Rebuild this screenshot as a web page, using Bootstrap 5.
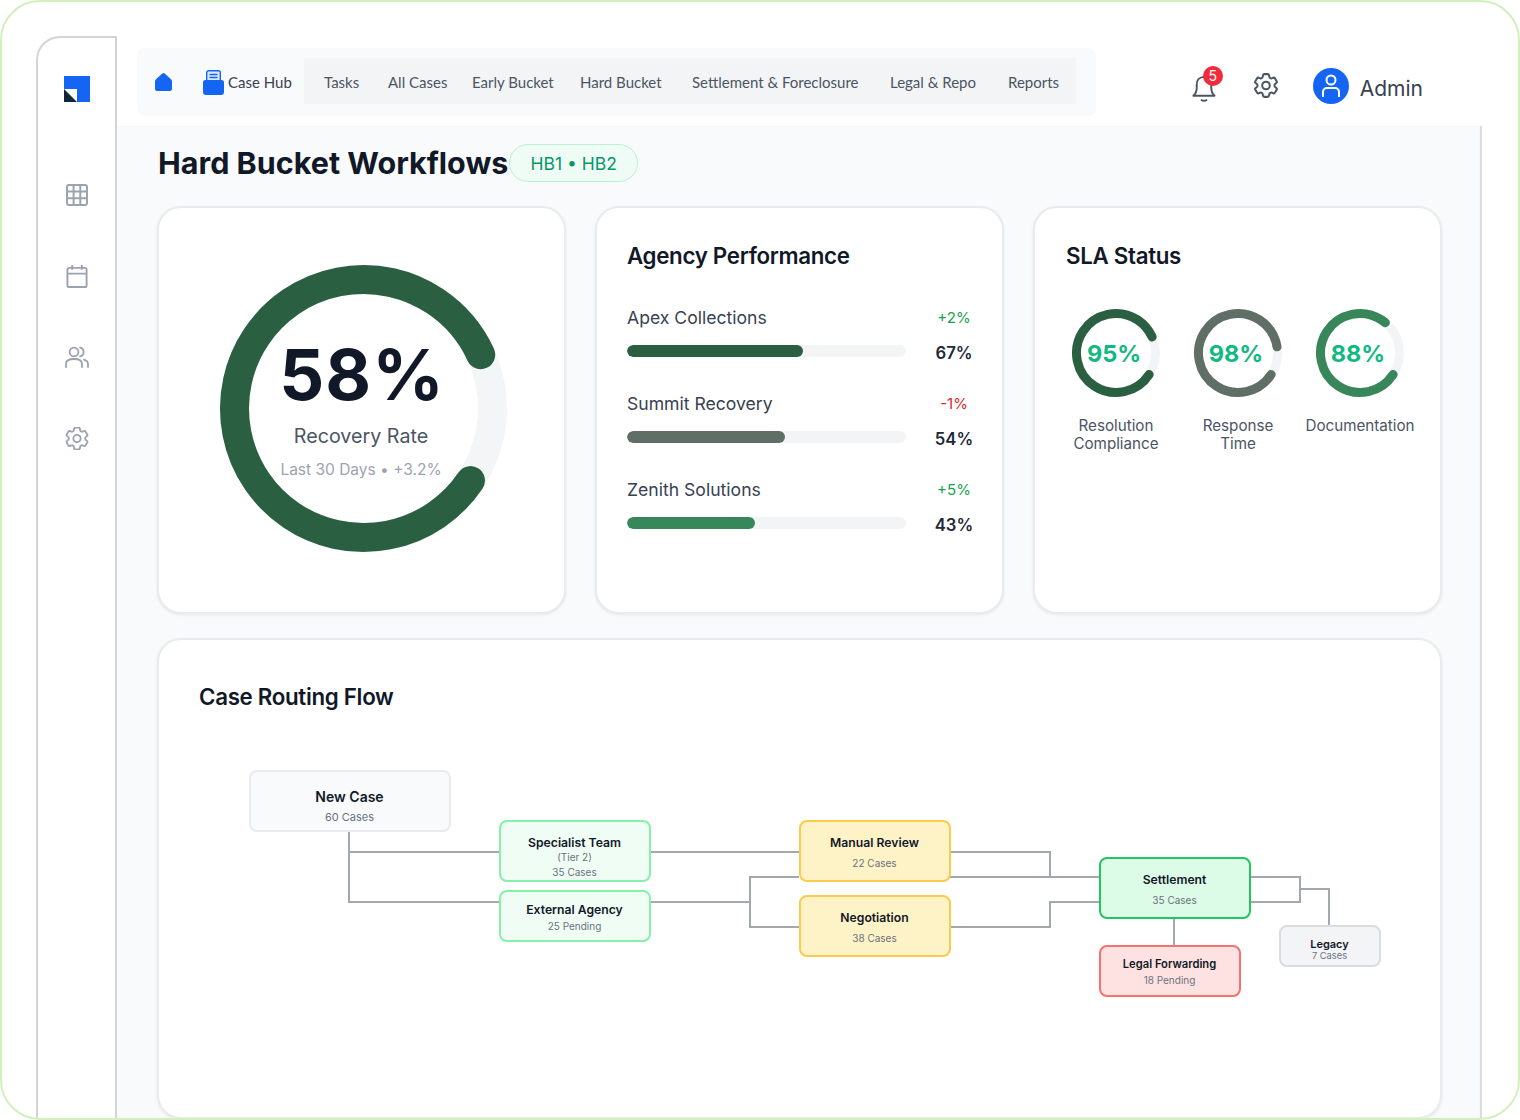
<!DOCTYPE html>
<html lang="en">
<head>
    <meta charset="UTF-8">
    <meta name="viewport" content="width=device-width, initial-scale=1.0">
    <title>Hard Bucket Workflows</title>
    <link href="https://cdn.jsdelivr.net/npm/bootstrap@5.3.0/dist/css/bootstrap.min.css" rel="stylesheet">
    <style>
        html, body { height: 1120px; overflow: hidden; }
        body { background: #fff; font-family: "Inter", "Liberation Sans", sans-serif; color: #111827; }
        .frame { width: 1520px; height: 1120px; border: 2px solid #d2f0bb; border-radius: 40px; padding: 34px 36px 0 34px; overflow: hidden; }
        .side { width: 81px; flex: none; border: 2px solid #d2d4d6; border-bottom: 0; border-top-left-radius: 24px; padding-top: 37px; }
        .side-logo { margin-bottom: 82px; }
        .side-ico { height: 81px; }
        .side-ico svg { display: block; }
        .main-col { min-width: 0; }
        .top { height: 90px; }
        .top-nav { margin: 12px 0 0 20px; width: 959px; height: 68px; background: #f9fafb; border-radius: 8px; padding: 10px 20px 0 18px; font-family: "Lato", "Noto Sans", sans-serif; color: #4b5563; font-size: 15px; }
        .nav-home { width: 48px; padding-top: 15px; }
        .nav-home svg { display: block; }
        .nav-hub { width: 101px; color: #374151; padding-top: 12px; }
        .nav-hub span { padding-top: 1px; line-height: 22px; }
        .nav-tabs-box { height: 46px; width: 772px; background: #f3f4f6; position: relative; }
        .nav-tabs-box span { position: absolute; top: 13px; }
        .top-user { padding: 32px 0 0 0; margin-right: 59px; }
        .bell-wrap { position: relative; width: 26px; height: 29px; margin: 5px 37px 0 0; }
        .bell-dot { position: absolute; left: 12px; top: -7px; width: 20px; height: 20px; border-radius: 50%; background: #ef2b3c; color: #fff; font-size: 14px; line-height: 20px; text-align: center; }
        .top-gear { margin-top: 5px; }
        .avatar { width: 36px; height: 36px; border-radius: 50%; background: #1565f5; margin-left: 35px; }
        .admin-name { font-size: 21px; color: #374151; margin-left: 11px; line-height: 36px; padding-top: 3px; }
        .content { background: #f8fafb; padding: 18px 40px 0 40px; height: 1000px; box-shadow: inset -2px 0 1px #d9dbde; }
        .page-title { font-size: 30.5px; font-weight: 700; line-height: 38px; margin: 0 0 0 1px; color: #111827; }
        .hb-pill { height: 38px; line-height: 38px; padding: 0 20px; border: 1px solid #bdf0d2; background: #effcf5; border-radius: 19px; color: #059669; font-size: 17.5px; margin-left: 1px; }
        .head-row { margin-bottom: 24px; }
        .panel { width: 409px; height: 408px; background: #fff; border: 2px solid #e9ebee; border-radius: 24px; box-shadow: 0 1px 3px rgba(0,0,0,.08); }
        .panel-row { gap: 29px; margin-bottom: 24px; }
        .panel-title { font-size: 22.3px; font-weight: 600; letter-spacing: -.3px; line-height: 30px; margin: 0; color: #111827; }
        .gauge { position: relative; width: 300px; height: 300px; margin: 50px 0 0 54px; }
        .gauge svg { display: block; }
        .gauge-text { position: absolute; left: 0; top: 0; width: 296px; text-align: center; }
        .gauge-num { font-size: 70.5px; font-weight: 700; line-height: 80px; margin-top: 77px; letter-spacing: 1px; color: #111827; padding-left: 2px; }
        .gauge-lab { font-size: 19.7px; color: #4b5563; line-height: 28px; margin-top: 7px; }
        .gauge-sub { font-size: 15.5px; color: #9ca3af; line-height: 24px; margin-top: 8px; }
        .perf { padding: 33px 30px 0 30px; }
        .perf-list { margin-top: 34px; }
        .perf-item { height: 86px; }
        .perf-name { font-size: 17.6px; color: #374151; line-height: 26px; }
        .perf-delta { font-size: 15px; width: 40px; text-align: center; line-height: 26px; margin-right: -2px; }
        .perf-up { color: #16a34a; }
        .perf-down { color: #dc2626; }
        .perf-line { margin-top: 8px; }
        .perf-bar { width: 279px; height: 12px; background: #f3f4f6; border-radius: 6px; margin-top: 6px; }
        .perf-bar .progress-bar { border-radius: 6px; }
        .perf-pct { font-size: 16.7px; font-weight: 600; color: #1f2937; line-height: 24px; width: 40px; text-align: center; margin: 2px -2px 0 0; }
        .sla { padding: 33px 0 0 31px; }
        .sla-row { margin: 37px 0 0 -11px; }
        .sla-item { width: 122px; text-align: center; }
        .sla-ring { position: relative; width: 90px; height: 90px; margin: 0 auto; }
        .sla-ring span { position: absolute; left: 0; right: 4px; top: 29px; font-size: 23.5px; font-weight: 700; line-height: 34px; color: #10b981; }
        .sla-lab { font-size: 15.2px; line-height: 18px; color: #4b5563; margin-top: 19px; }
        .flow-panel { position: relative; height: 481px; background: #fff; border: 2px solid #e9ebee; border-radius: 24px; box-shadow: 0 1px 3px rgba(0,0,0,.08); }
        .flow-title { position: absolute; left: 40px; top: 42px; }
        .flow-lines { position: absolute; left: 0; top: 0; }
        .fnode { position: absolute; border: 2.5px solid; border-radius: 8px; text-align: center; display: flex; flex-direction: column; align-items: center; }
        .fnode b { font-weight: 600; color: #111827; line-height: 14px; }
        .fnode small { color: #6b7280; }
        .n-grey { background: #f8fafb; border-color: #e9ebee; }
        .n-green { background: #effdf4; border-color: #86efac; }
        .n-yellow { background: #fef3c7; border-color: #fbcb4e; }
        .n-sett { background: #dcfce7; border-color: #22c55e; }
        .n-red { background: #fee2e2; border-color: #f87171; }
        .n-leg { background: #f3f4f6; border-color: #d9dce1; }
    </style>
</head>
<body>
<div class="frame d-flex">
    <div class="side d-flex flex-column align-items-center">
        <div class="side-logo">
            <svg width="26" height="26" viewBox="0 0 26 26"><rect width="26" height="26" fill="#1565f5"/><path d="M0 13H13V26H0z" fill="#fff"/><path d="M0 13L13 26H0z" fill="#12263a"/></svg>
        </div>
        <div class="side-ico">
            <svg width="22" height="22" viewBox="0 0 22 22" fill="none" stroke="#9ca3af" stroke-width="2"><rect x="1" y="1" width="20" height="20" rx="2"/><path d="M1 7.6H21M1 14.3H21M7.6 1V21M14.3 1V21"/></svg>
        </div>
        <div class="side-ico">
            <svg width="22" height="23" viewBox="0 0 22 24" fill="none" stroke="#9ca3af" stroke-width="2"><rect x="1" y="3" width="20" height="20" rx="2"/><path d="M1 9H21M6 0V5M16 0V5"/></svg>
        </div>
        <div class="side-ico">
            <svg width="24" height="22" viewBox="0 0 24 22" fill="none" stroke="#9ca3af" stroke-width="1.8" stroke-linecap="round"><circle cx="9" cy="6" r="4.4"/><path d="M1 21V18C1 15 4 13 9 13S17 15 17 18V21M15 1.6C17.5 2 18.6 4 18.6 6S17.5 10 15 10.4M19 13.6C21.5 14.4 23 16 23 18V21"/></svg>
        </div>
        <div class="side-ico">
            <svg width="24" height="23" viewBox="2.5 2.5 19 19" fill="none" stroke="#9ca3af" stroke-width="1.5"><path d="M9.594 3.94c.09-.542.56-.94 1.11-.94h2.593c.55 0 1.02.398 1.11.94l.213 1.281c.063.374.313.686.645.87.074.04.147.083.22.127.324.196.72.257 1.075.124l1.217-.456a1.125 1.125 0 011.37.49l1.296 2.247a1.125 1.125 0 01-.26 1.431l-1.003.827c-.293.24-.438.613-.431.992a6.759 6.759 0 010 .255c-.007.378.138.75.43.99l1.005.828c.424.35.534.954.26 1.43l-1.298 2.247a1.125 1.125 0 01-1.369.491l-1.217-.456c-.355-.133-.75-.072-1.076.124a6.57 6.57 0 01-.22.128c-.331.183-.581.495-.644.869l-.213 1.28c-.09.543-.56.941-1.11.941h-2.594c-.55 0-1.02-.398-1.11-.94l-.213-1.281c-.062-.374-.312-.686-.644-.87a6.52 6.52 0 01-.22-.127c-.325-.196-.72-.257-1.076-.124l-1.217.456a1.125 1.125 0 01-1.369-.49l-1.297-2.247a1.125 1.125 0 01.26-1.431l1.004-.827c.292-.24.437-.613.43-.992a6.932 6.932 0 010-.255c.007-.378-.138-.75-.43-.99l-1.004-.828a1.125 1.125 0 01-.26-1.43l1.297-2.247a1.125 1.125 0 011.37-.491l1.216.456c.356.133.751.072 1.076-.124.072-.044.146-.087.22-.128.332-.183.582-.495.644-.869l.214-1.281z"/><path d="M15 12a3 3 0 11-6 0 3 3 0 016 0z"/></svg>
        </div>
    </div>
    <div class="main-col flex-grow-1">
        <div class="top d-flex justify-content-between">
            <div class="top-nav d-flex">
                <div class="nav-home">
                    <svg width="17" height="18" viewBox="0 0 17 18"><path d="M7.300 .6a1.800 1.800 0 0 1 2.400 0L16 6.200a3 3 0 0 1 1 2.200V16a2 2 0 0 1-2 2H2a2 2 0 0 1-2-2V8.400a3 3 0 0 1 1-2.200z" fill="#1565f5"/></svg>
                </div>
                <div class="nav-hub d-flex">
                    <svg class="me-1" width="21" height="25" viewBox="0 0 21 25" fill="none"><rect x="3.700" y=".7" width="13.600" height="13" rx="2" fill="#dbe8ff" stroke="#1565f5" stroke-width="1.400"/><path d="M6.500 4.500H14.500M6.500 7.500H14.500" stroke="#1565f5" stroke-width="1.300"/><path d="M0 12.500A2.500 2.500 0 0 1 2.500 10H18.500A2.500 2.500 0 0 1 21 12.500V22a3 3 0 0 1-3 3H3a3 3 0 0 1-3-3z" fill="#1565f5"/></svg>
                    <span>Case Hub</span>
                </div>
                <div class="nav-tabs-box">
                    <span style="left:20px">Tasks</span>
                    <span style="left:84px">All Cases</span>
                    <span style="left:168px">Early Bucket</span>
                    <span style="left:276px">Hard Bucket</span>
                    <span style="left:388px">Settlement &amp; Foreclosure</span>
                    <span style="left:586px">Legal &amp; Repo</span>
                    <span style="left:704px">Reports</span>
                </div>
            </div>
            <div class="top-user d-flex align-items-start">
                <div class="bell-wrap">
                    <svg width="26" height="29" viewBox="0 0 26 30" fill="none" stroke="#4b5563" stroke-width="2" stroke-linecap="round" stroke-linejoin="round"><path d="M2 23.500C4.500 21.500 5.500 19 5.500 15V12C5.500 7.500 8 4 13 4S20.500 7.500 20.500 12V15C20.500 19 21.500 21.500 24 23.500Z"/><path d="M10.500 28C11.500 29 14.500 29 15.500 28"/></svg>
                    <div class="bell-dot">5</div>
                </div>
                <svg class="top-gear" width="24" height="25" viewBox="2.500 2.500 19 19" fill="none" stroke="#4b5563" stroke-width="1.600"><path d="M9.594 3.94c.09-.542.56-.94 1.11-.94h2.593c.55 0 1.02.398 1.11.94l.213 1.281c.063.374.313.686.645.87.074.04.147.083.22.127.324.196.72.257 1.075.124l1.217-.456a1.125 1.125 0 011.37.49l1.296 2.247a1.125 1.125 0 01-.26 1.431l-1.003.827c-.293.24-.438.613-.431.992a6.759 6.759 0 010 .255c-.007.378.138.75.43.99l1.005.828c.424.35.534.954.26 1.43l-1.298 2.247a1.125 1.125 0 01-1.369.491l-1.217-.456c-.355-.133-.75-.072-1.076.124a6.57 6.57 0 01-.22.128c-.331.183-.581.495-.644.869l-.213 1.28c-.09.543-.56.941-1.11.941h-2.594c-.55 0-1.02-.398-1.11-.94l-.213-1.281c-.062-.374-.312-.686-.644-.87a6.52 6.52 0 01-.22-.127c-.325-.196-.72-.257-1.076-.124l-1.217.456a1.125 1.125 0 01-1.369-.49l-1.297-2.247a1.125 1.125 0 01.26-1.431l1.004-.827c.292-.24.437-.613.43-.992a6.932 6.932 0 010-.255c.007-.378-.138-.75-.43-.99l-1.004-.828a1.125 1.125 0 01-.26-1.43l1.297-2.247a1.125 1.125 0 011.37-.491l1.216.456c.356.133.751.072 1.076-.124.072-.044.146-.087.22-.128.332-.183.582-.495.644-.869l.214-1.281z"/><path d="M15 12a3 3 0 11-6 0 3 3 0 016 0z"/></svg>
                <div class="avatar d-flex align-items-center justify-content-center">
                    <svg width="20" height="24" viewBox="0 0 20 24" fill="none" stroke="#fff" stroke-width="2"><circle cx="10" cy="6" r="4.500"/><path d="M2 23V18A4 4 0 0 1 6 14H14A4 4 0 0 1 18 18V23"/></svg>
                </div>
                <div class="admin-name">Admin</div>
            </div>
        </div>
        <div class="content">
            <div class="head-row d-flex align-items-center">
                <h1 class="page-title">Hard Bucket Workflows</h1>
                <span class="hb-pill">HB1 &bull; HB2</span>
            </div>
            <div class="panel-row d-flex">
                <div class="panel">
                    <div class="gauge">
                        <svg width="300" height="300" viewBox="0 0 300 300">
                            <circle cx="150.500" cy="150.500" r="129" fill="none" stroke="#f3f5f6" stroke-width="29"/>
                            <circle cx="150.500" cy="150.500" r="129" fill="none" stroke="#2a6041" stroke-width="29" stroke-linecap="round" pathLength="100" stroke-dasharray="83.700 100" transform="rotate(34 150.500 150.500)"/>
                        </svg>
                        <div class="gauge-text">
                            <div class="gauge-num">58%</div>
                            <div class="gauge-lab">Recovery Rate</div>
                            <div class="gauge-sub">Last 30 Days &bull; +3.2%</div>
                        </div>
                    </div>
                </div>
                <div class="panel perf">
                    <h2 class="panel-title">Agency Performance</h2>
                    <div class="perf-list" id="perf-list"></div>
                </div>
                <div class="panel sla">
                    <h2 class="panel-title">SLA Status</h2>
                    <div class="sla-row d-flex" id="sla-row"></div>
                </div>
            </div>
            <div class="flow-panel">
                <h2 class="panel-title flow-title">Case Routing Flow</h2>
                <svg class="flow-lines" width="1282" height="477" fill="none" stroke="#a3a7ae" stroke-width="2">
                    <path d="M190 192V262H340M190 212H340"/>
                    <path d="M490 212H640M490 262H591V237H640M591 262V287H640"/>
                    <path d="M790 212H891V237H940M790 237H940M790 287H891V262H940"/>
                    <path d="M1090 237H1141V262H1090M1141 249H1170V287"/>
                    <path d="M1015 278V307"/>
                </svg>
                <div id="flow-nodes"></div>
            </div>
        </div>
    </div>
</div>

<script>
    var agencies = [
        { name: "Apex Collections", delta: "+2%", up: true, pct: 67, w: 176, color: "#2a6041" },
        { name: "Summit Recovery", delta: "-1%", up: false, pct: 54, w: 158, color: "#5f6f65" },
        { name: "Zenith Solutions", delta: "+5%", up: true, pct: 43, w: 128, color: "#38875a" }
    ];
    var html = "";
    agencies.forEach(function (a) {
        html += `
            <div class="perf-item">
                <div class="d-flex justify-content-between">
                    <span class="perf-name">${a.name}</span>
                    <span class="perf-delta ${a.up ? 'perf-up' : 'perf-down'}">${a.delta}</span>
                </div>
                <div class="perf-line d-flex justify-content-between align-items-start">
                    <div class="progress perf-bar"><div class="progress-bar" style="width:${a.w}px;background-color:${a.color}"></div></div>
                    <span class="perf-pct">${a.pct}%</span>
                </div>
            </div>`;
    });
    document.getElementById("perf-list").innerHTML = html;

    var sla = [
        { label: "Resolution<br>Compliance", pct: 95, span: 303, color: "#2a6041" },
        { label: "Response<br>Time", pct: 98, span: 318, color: "#5f6f65" },
        { label: "Documentation", pct: 88, span: 277, color: "#38875a" }
    ];
    html = "";
    sla.forEach(function (s) {
        html += `
            <div class="sla-item">
                <div class="sla-ring">
                    <svg width="90" height="90" viewBox="0 0 90 90">
                        <circle cx="45" cy="45" r="39.500" fill="none" stroke="#f3f4f6" stroke-width="9"/>
                        <circle cx="45" cy="45" r="39.500" fill="none" stroke="${s.color}" stroke-width="9" stroke-linecap="round" pathLength="360" stroke-dasharray="${s.span} 360" transform="rotate(33 45 45)"/>
                    </svg>
                    <span>${s.pct}%</span>
                </div>
                <div class="sla-lab">${s.label}</div>
            </div>`;
    });
    document.getElementById("sla-row").innerHTML = html;

    // node places on the diagram canvas, relative to the panel
    var nodes = [
        { x: 89.5, y: 129.5, w: 202, h: 62, cls: "n-grey", title: "New Case", sub: "60 Cases", fs: 14, ss: 11, lh: 14, pt: 18, gap: 6 },
        { x: 339.5, y: 179.5, w: 152, h: 62, cls: "n-green", title: "Specialist Team", sub: "(Tier 2)<br>35 Cases", fs: 12.2, ss: 10, lh: 15, pt: 14, gap: .5 },
        { x: 339.5, y: 249.5, w: 152, h: 52, cls: "n-green", title: "External Agency", sub: "25 Pending", fs: 12.2, ss: 10, lh: 14, pt: 11, gap: 2 },
        { x: 639.5, y: 179.5, w: 152, h: 62, cls: "n-yellow", title: "Manual Review", sub: "22 Cases", fs: 12.2, ss: 10, lh: 14, pt: 14, gap: 6 },
        { x: 639.5, y: 254.5, w: 152, h: 62, cls: "n-yellow", title: "Negotiation", sub: "38 Cases", fs: 12.2, ss: 10, lh: 14, pt: 14, gap: 6 },
        { x: 939.5, y: 216.5, w: 152, h: 62, cls: "n-sett", title: "Settlement", sub: "35 Cases", fs: 12.2, ss: 10, lh: 14, pt: 14, gap: 6 },
        { x: 939.5, y: 304.5, w: 142, h: 52, cls: "n-red", title: "Legal Forwarding", sub: "18 Pending", fs: 11.2, ss: 10, lh: 14, pt: 10, gap: 2 },
        { x: 1119.5, y: 284.5, w: 102, h: 42, cls: "n-leg", title: "Legacy", sub: "7 Cases", fs: 11, ss: 9.3, lh: 10, pt: 10, gap: 0 }
    ];
    html = "";
    nodes.forEach(function (n) {
        html += `<div class="fnode ${n.cls}" style="left:${n.x}px;top:${n.y}px;width:${n.w}px;height:${n.h}px;padding-top:${n.pt}px;gap:${n.gap}px">
            <b style="font-size:${n.fs}px">${n.title}</b><small style="font-size:${n.ss}px;line-height:${n.lh}px">${n.sub}</small></div>`;
    });
    document.getElementById("flow-nodes").innerHTML = html;
</script>
<script src="https://cdn.jsdelivr.net/npm/bootstrap@5.3.0/dist/js/bootstrap.bundle.min.js"></script>
</body>
</html>
